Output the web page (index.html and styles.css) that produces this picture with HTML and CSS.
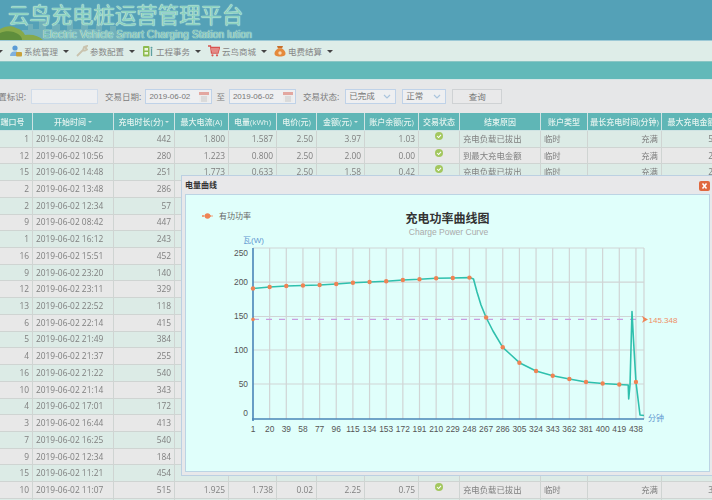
FILE: index.html
```html
<!DOCTYPE html>
<html lang="zh">
<head>
<meta charset="utf-8">
<title>云鸟充电桩运营管理平台</title>
<link rel="stylesheet" href="styles.css">
</head>
<body>
<div class="page">
  <header class="banner">
    <svg class="scene" viewBox="0 0 150 22" width="150" height="22">
      <path d="M22 22V12h6V6h5v5h6V3h7v8h6V6h8v6h7V2h6v9h8V4h7v7h8V6h6v7h8V8h6v7h8v7z" fill="#7fb9bc" opacity=".65"/>
      <path d="M0 11c5-3 12-4 16-1 4 1 8 4 9 7 8-1 14 1 18 5H0z" fill="#86a94a"/>
      <path d="M0 15c6-3 14-2 18 1 3 2 4 4 4 6H0z" fill="#5f8e3c"/>
    </svg>
    <h1 class="brand">云鸟充电桩运营管理平台</h1>
    <p class="slogan">Electric Vehicle Smart Charging Station lution</p>
  </header>

  <nav class="menu">
    <i class="caret"></i>
    <a class="menu-item"><svg class="ico" viewBox="0 0 12 12"><circle cx="5" cy="3" r="2.6" fill="#5b9bd5"/><path d="M0 11c0-3 2-4.5 4-4.5h3V11z" fill="#7fb0de"/><rect x="6" y="7" width="6" height="4.5" rx="1" fill="#c9a13a"/></svg>系统管理<i class="caret"></i></a>
    <a class="menu-item"><svg class="ico" viewBox="0 0 12 12"><path d="M1 11l6-6M7 5l1-3 3-1-1.5 2L11 4.500 9 5.500z" fill="none" stroke="#c9c3ae" stroke-width="1.800"/></svg>参数配置<i class="caret"></i></a>
    <a class="menu-item"><svg class="ico" viewBox="0 0 12 12"><rect x="1" y="1" width="6.500" height="10.500" rx="1" fill="#8dbb4e"/><rect x="2.500" y="3" width="3.500" height="2.500" fill="#eef5dd"/><rect x="2.500" y="7" width="3.500" height="2.500" fill="#eef5dd"/><path d="M9.500 4v7" stroke="#5ea0a0" stroke-width="1.300"/><circle cx="9.500" cy="2.800" r="1" fill="#5ea0a0"/></svg>工程事务<i class="caret"></i></a>
    <a class="menu-item"><svg class="ico" viewBox="0 0 12 12"><path d="M0 1h2.500l1 7h6.500l1.500-5.500H3" fill="none" stroke="#d9534f" stroke-width="1.300"/><path d="M3.500 3h7.500l-1 4.500H4.200z" fill="#e58a86"/><circle cx="4.500" cy="10.300" r="1.100" fill="#d9534f"/><circle cx="9" cy="10.300" r="1.100" fill="#d9534f"/></svg>云鸟商城<i class="caret"></i></a>
    <a class="menu-item"><svg class="ico" viewBox="0 0 12 12"><path d="M4 3.500L3 1h6L8 3.500z" fill="#c96f2a"/><path d="M4 3.500h4c2.500 1.500 3.500 3.500 3.500 5 0 2-1.500 3-5.500 3S.5 10.500.5 8.500c0-1.500 1-3.500 3.500-5z" fill="#e58a3c"/><circle cx="6" cy="8" r="1.700" fill="#f7d9b4"/></svg>电费结算<i class="caret"></i></a>
  </nav>

  <div class="strip"></div>

  <form class="filters">
    <label class="clip-label"><span>置标识:</span></label>
    <span class="field field-id"></span>
    <label class="lab lab-date">交易日期:</label>
    <span class="field field-date">2019-06-02<svg class="cal" viewBox="0 0 10 10"><rect width="10" height="10" fill="#ececec"/><rect width="10" height="3" fill="#e3a7a0"/><path d="M2 5h6M2 7h6M2 9h6" stroke="#c9c9c9"/></svg></span>
    <label class="lab">至</label>
    <span class="field field-date">2019-06-02<svg class="cal" viewBox="0 0 10 10"><rect width="10" height="10" fill="#ececec"/><rect width="10" height="3" fill="#e3a7a0"/><path d="M2 5h6M2 7h6M2 9h6" stroke="#c9c9c9"/></svg></span>
    <label class="lab lab-state">交易状态:</label>
    <span class="field field-select sel-a">已完成<svg class="chev" viewBox="0 0 8 5"><path d="M1 1l3 3 3-3" fill="none" stroke="#a9c4dd" stroke-width="1.200"/></svg></span>
    <span class="field field-select sel-b">正常<svg class="chev" viewBox="0 0 8 5"><path d="M1 1l3 3 3-3" fill="none" stroke="#a9c4dd" stroke-width="1.200"/></svg></span>
    <button class="query" type="button">查询</button>
  </form>

  <table class="grid">
    <colgroup>
      <col class="c1"><col class="c2"><col class="c3"><col class="c4"><col class="c5"><col class="c6"><col class="c7"><col class="c8"><col class="c9"><col class="c10"><col class="c11"><col class="c12"><col class="c13">
    </colgroup>
    <thead>
      <tr><th>端口号</th><th>开始时间 <i class="sort"></i></th><th>充电时长(分) <i class="sort"></i></th><th>最大电流(A)</th><th>电量(kWh)</th><th>电价(元)</th><th>金额(元) <i class="sort"></i></th><th>账户余额(元)</th><th>交易状态</th><th>结束原因</th><th>账户类型</th><th>最长充电时间(分钟)</th><th class="lastcol">最大充电金额</th></tr>
    </thead>
    <tbody>
      <tr><td>1</td><td class="l">2019-06-02 08:42</td><td>442</td><td>1.800</td><td>1.587</td><td>2.50</td><td>3.97</td><td>1.03</td><td class="ok"><svg class="tick" viewBox="0 0 10 10"><circle cx="5" cy="5" r="5" fill="#a3c75f"/><path d="M2.500 5l2 2 3-3.500" fill="none" stroke="#fff" stroke-width="1.300"/></svg></td><td class="l">充电负载已拔出</td><td class="l">临时</td><td>充满</td><td class="lastv">5</td></tr>
      <tr><td>12</td><td class="l">2019-06-02 10:56</td><td>280</td><td>1.223</td><td>0.800</td><td>2.50</td><td>2.00</td><td>0.00</td><td class="ok"><svg class="tick" viewBox="0 0 10 10"><circle cx="5" cy="5" r="5" fill="#a3c75f"/><path d="M2.500 5l2 2 3-3.500" fill="none" stroke="#fff" stroke-width="1.300"/></svg></td><td class="l">到最大充电金额</td><td class="l">临时</td><td>充满</td><td class="lastv">2</td></tr>
      <tr><td>15</td><td class="l">2019-06-02 14:48</td><td>251</td><td>1.773</td><td>0.633</td><td>2.50</td><td>1.58</td><td>0.42</td><td class="ok"><svg class="tick" viewBox="0 0 10 10"><circle cx="5" cy="5" r="5" fill="#a3c75f"/><path d="M2.500 5l2 2 3-3.500" fill="none" stroke="#fff" stroke-width="1.300"/></svg></td><td class="l">充电负载已拔出</td><td class="l">临时</td><td>充满</td><td class="lastv">2</td></tr>
      <tr><td>2</td><td class="l">2019-06-02 13:48</td><td>286</td><td colspan="10"></td></tr>
      <tr><td>2</td><td class="l">2019-06-02 12:34</td><td>57</td><td colspan="10"></td></tr>
      <tr><td>9</td><td class="l">2019-06-02 08:42</td><td>447</td><td colspan="10"></td></tr>
      <tr><td>1</td><td class="l">2019-06-02 16:12</td><td>243</td><td colspan="10"></td></tr>
      <tr><td>16</td><td class="l">2019-06-02 15:51</td><td>452</td><td colspan="10"></td></tr>
      <tr><td>9</td><td class="l">2019-06-02 23:20</td><td>140</td><td colspan="10"></td></tr>
      <tr><td>12</td><td class="l">2019-06-02 23:11</td><td>329</td><td colspan="10"></td></tr>
      <tr><td>13</td><td class="l">2019-06-02 22:52</td><td>118</td><td colspan="10"></td></tr>
      <tr><td>6</td><td class="l">2019-06-02 22:14</td><td>415</td><td colspan="10"></td></tr>
      <tr><td>5</td><td class="l">2019-06-02 21:49</td><td>384</td><td colspan="10"></td></tr>
      <tr><td>4</td><td class="l">2019-06-02 21:37</td><td>255</td><td colspan="10"></td></tr>
      <tr><td>16</td><td class="l">2019-06-02 21:22</td><td>540</td><td colspan="10"></td></tr>
      <tr><td>10</td><td class="l">2019-06-02 21:14</td><td>343</td><td colspan="10"></td></tr>
      <tr><td>4</td><td class="l">2019-06-02 17:01</td><td>172</td><td colspan="10"></td></tr>
      <tr><td>3</td><td class="l">2019-06-02 16:44</td><td>413</td><td colspan="10"></td></tr>
      <tr><td>7</td><td class="l">2019-06-02 16:25</td><td>540</td><td colspan="10"></td></tr>
      <tr><td>9</td><td class="l">2019-06-02 12:34</td><td>184</td><td colspan="10"></td></tr>
      <tr><td>15</td><td class="l">2019-06-02 11:21</td><td>454</td><td></td><td></td><td></td><td></td><td></td><td></td><td></td><td></td><td></td><td></td></tr>
      <tr><td>10</td><td class="l">2019-06-02 11:07</td><td>515</td><td>1.925</td><td>1.738</td><td>0.02</td><td>2.25</td><td>0.75</td><td class="ok"><svg class="tick" viewBox="0 0 10 10"><circle cx="5" cy="5" r="5" fill="#a3c75f"/><path d="M2.500 5l2 2 3-3.500" fill="none" stroke="#fff" stroke-width="1.300"/></svg></td><td class="l">充电负载已拔出</td><td class="l">临时</td><td>充满</td><td class="lastv">3</td></tr>
      <tr><td></td><td></td><td></td><td></td><td></td><td></td><td></td><td></td><td></td><td></td><td></td><td></td><td></td></tr>
    </tbody>
  </table>

  <section class="dialog">
    <div class="dialog-head">
      <span class="dialog-title">电量曲线</span>
      <svg class="close" viewBox="0 0 11 10"><rect width="11" height="10" rx="2" fill="#e0683f"/><path d="M3.500 2.500l4 5M7.500 2.500l-4 5" stroke="#fff" stroke-width="1.500"/></svg>
    </div>
    <div class="dialog-body">
      <svg class="chart" viewBox="185 194 525 278" width="525" height="278">
        <path class="grid-line" d="M253 248H644M253 282.200H644M253 316.500H644M253 350H644M253 384H644M269.650 248V419M286.300 248V419M302.950 248V419M319.600 248V419M336.250 248V419M352.900 248V419M369.550 248V419M386.200 248V419M402.850 248V419M419.500 248V419M436.150 248V419M452.800 248V419M469.450 248V419M486.100 248V419M502.750 248V419M519.400 248V419M536.050 248V419M552.700 248V419M569.350 248V419M586 248V419M602.650 248V419M619.300 248V419M635.950 248V419M644 248V419"/>
        <path class="axis" d="M253 248V421M252 419H644"/>
        <path class="mark-line" d="M253 319.400H640"/>
        <path class="curve" d="M253 288.500L269.650 287L286.300 286L302.950 285.500L319.600 285L336.250 284L352.900 282.700L369.550 282L386.200 281.200L402.850 280L419.500 279.300L436.150 278.200L452.800 278L469.450 277.600L473.500 279L477 292L481 305L486.100 317.500L493 331L502.750 347.300L510 354L519.400 362.700L536.050 371L552.700 375.700L569.350 379L586 382L602.650 383.500L619.300 384.500L628.200 385L628.700 399L630 385L632 311.500L633.500 340L635.950 382L640 415L644 415.500"/>
        <g class="dots">
          <circle cx="253" cy="288.500" r="2.200"/><circle cx="269.650" cy="287" r="2.200"/><circle cx="286.300" cy="286" r="2.200"/><circle cx="302.950" cy="285.500" r="2.200"/><circle cx="319.600" cy="285" r="2.200"/><circle cx="336.250" cy="284" r="2.200"/><circle cx="352.900" cy="282.700" r="2.200"/><circle cx="369.550" cy="282" r="2.200"/><circle cx="386.200" cy="281.200" r="2.200"/><circle cx="402.850" cy="280" r="2.200"/><circle cx="419.500" cy="279.300" r="2.200"/><circle cx="436.150" cy="278.200" r="2.200"/><circle cx="452.800" cy="278" r="2.200"/><circle cx="469.450" cy="277.600" r="2.200"/><circle cx="486.100" cy="317.500" r="2.200"/><circle cx="502.750" cy="347.300" r="2.200"/><circle cx="519.400" cy="362.700" r="2.200"/><circle cx="536.050" cy="371" r="2.200"/><circle cx="552.700" cy="375.700" r="2.200"/><circle cx="569.350" cy="379" r="2.200"/><circle cx="586" cy="382" r="2.200"/><circle cx="602.650" cy="383.500" r="2.200"/><circle cx="619.300" cy="384.500" r="2.200"/><circle cx="635.950" cy="382" r="2.200"/>
          <circle cx="253" cy="319.400" r="1.800"/>
          <path d="M642 316l6 3.400-6 3.400 1.500-3.400z"/>
        </g>
        <text class="mark-label" x="648.500" y="322.500">145.348</text>
        <g class="legend">
          <path d="M202 216H213" stroke="#ef8354" stroke-width="1.500" stroke-dasharray="2.500 1"/>
          <circle cx="207.500" cy="216" r="2.800" fill="#ef8354"/>
          <text x="219" y="219">有功功率</text>
        </g>
        <text class="chart-title" x="447.500" y="223" text-anchor="middle">充电功率曲线图</text>
        <text class="chart-sub" x="448.500" y="235" text-anchor="middle">Charge Power Curve</text>
        <text class="unit" x="243" y="243">瓦(W)</text>
        <text class="unit" x="648" y="421">分钟</text>
        <g class="yl" text-anchor="end">
          <text x="248" y="256">250</text><text x="248" y="285">200</text><text x="248" y="319">150</text><text x="248" y="353">100</text><text x="248" y="387">50</text><text x="248" y="416">0</text>
        </g>
        <g class="xl" text-anchor="middle">
          <text x="253" y="432">1</text><text x="269.650" y="432">20</text><text x="286.300" y="432">39</text><text x="302.950" y="432">58</text><text x="319.600" y="432">77</text><text x="336.250" y="432">96</text><text x="352.900" y="432">115</text><text x="369.550" y="432">134</text><text x="386.200" y="432">153</text><text x="402.850" y="432">172</text><text x="419.500" y="432">191</text><text x="436.150" y="432">210</text><text x="452.800" y="432">229</text><text x="469.450" y="432">248</text><text x="486.100" y="432">267</text><text x="502.750" y="432">286</text><text x="519.400" y="432">305</text><text x="536.050" y="432">324</text><text x="552.700" y="432">343</text><text x="569.350" y="432">362</text><text x="586" y="432">381</text><text x="602.650" y="432">400</text><text x="619.300" y="432">419</text><text x="635.950" y="432">438</text>
        </g>
      </svg>
    </div>
  </section>
</div>
</body>
</html>
```
FILE: styles.css
```css
html, body { margin: 0; height: 100%; overflow: hidden; background: #e8e8e8; }
body { font-family: "Open Sans", "Noto Sans CJK SC", sans-serif; color: #808080; }
.page { position: relative; width: 712px; height: 500px; overflow: hidden; filter: blur(.5px); }

.banner { position: relative; height: 40px; background: #54a1b7; border-bottom: 1px solid #9cc9d6; overflow: hidden; }
.scene { position: absolute; left: 0; bottom: 0; }
.brand { position: relative; margin: 0; padding: 2px 0 0 8px; font: 400 21.4px/24px "Noto Sans CJK SC", sans-serif; color: #8dd3c0; text-shadow: 0 0 1px #d9f5ea, 0 0 1px #d9f5ea; white-space: nowrap; }
.slogan { position: relative; margin: 0; padding: 4px 0 0 43px; font: 400 10.400px/10px "Liberation Sans", sans-serif; color: #74c2b0; text-shadow: 0 0 1px #e4f7f0, 0 0 1px #e4f7f0; white-space: nowrap; }

.menu { display: flex; align-items: center; height: 20px; margin-left: -3px; background: #deede8; border-bottom: 1px solid #8ac6c4; font: 400 8.500px/20px "Noto Sans CJK SC", sans-serif; color: #858585; }
.menu-item { display: flex; align-items: center; margin-left: 7px; white-space: nowrap; }
.ico { width: 12px; height: 12px; margin-right: 2px; }
.caret { display: block; width: 0; height: 0; border: 3px solid transparent; border-top: 3.500px solid #444; border-bottom: 0; margin-left: 5px; }
.menu > .caret { margin-left: 0; }

.strip { height: 17px; background: #62b9b9; border-bottom: 1px solid #d5e6e6; }

.filters { display: flex; align-items: center; height: 33px; margin: 0; background: #e6e7e8; font: 400 8.500px/15px "Noto Sans CJK SC", sans-serif; color: #7d7d7d; white-space: nowrap; }
.clip-label { display: flex; justify-content: flex-end; width: 26px; margin-right: 5px; overflow: hidden; flex: none; }
.clip-label span { flex: none; }
.field { display: flex; align-items: center; box-sizing: border-box; height: 15px; flex: none; background: #eeeff1; border: 1px solid #bfd2e8; padding-left: 3px; font-family: "Liberation Sans", "Noto Sans CJK SC", sans-serif; font-size: 8px; color: #777; }
.field-id { width: 67px; border-color: #d0dcea; }
.lab { margin: 0 4px; flex: none; }
.lab-date { margin-left: 7px; }
.lab-state { margin-left: 7px; margin-right: 6px; }
.field-date { width: 67px; justify-content: space-between; padding-right: 2px; }
.cal { width: 10px; height: 10px; }
.field-select { justify-content: space-between; padding-right: 4px; font-size: 8.500px; }
.sel-a { width: 51px; }
.sel-b { width: 44px; margin-left: 6px; }
.chev { width: 8px; height: 5px; }
.query { box-sizing: border-box; width: 50px; height: 15px; margin-left: 6px; padding: 0; background: #e9e9ea; border: 1px solid #cfd2d4; font: 400 8.500px/13px "Noto Sans CJK SC", sans-serif; color: #777; flex: none; }

.grid { table-layout: fixed; border-collapse: collapse; width: 729px; margin-left: -8px; font: 400 8.400px/10px "Open Sans", "Noto Sans CJK SC", sans-serif; color: #7f7f7f; }
.c1 { width: 40px; } .c2 { width: 81px; } .c3 { width: 61px; } .c4 { width: 54px; } .c5 { width: 48px; } .c6 { width: 40px; } .c7 { width: 48px; } .c8 { width: 54px; } .c9 { width: 41px; } .c10 { width: 81px; } .c11 { width: 47px; } .c12 { width: 74px; } .c13 { width: 60px; }
.grid th { height: 17px; padding: 0; background: #5fb6b6; border: 1px solid #cfe3e3; border-top: 0; color: #e4f3ef; font-weight: 500; font-size: 8px; white-space: nowrap; overflow: hidden; }
.grid td { height: 16.720px; box-sizing: border-box; padding: 0 3px; text-align: right; border: 1px solid #cfd4d2; white-space: nowrap; overflow: hidden; }
.grid tbody tr:nth-child(odd) { background: #dcebe6; }
.grid tbody tr:nth-child(even) { background: #e8e8e8; }
.grid td.l { text-align: left; }
.grid td.ok { text-align: center; vertical-align: top; padding-top: 1px; }
.grid td.lastv { padding-right: 8px; }
.tick { display: block; width: 8px; height: 8px; margin: 0 auto; }
.sort { display: inline-block; width: 0; height: 0; border: 2px solid transparent; border-top: 2.500px solid #cfe6e4; border-bottom: 0; vertical-align: middle; }
.lastcol { text-align: center; }

.dialog { position: absolute; left: 181px; top: 175px; width: 531px; height: 301px; box-sizing: border-box; padding: 0 2px 3px 3px; background: #e8e8ea; border: 1px solid #bcd0e2; border-right: 0; display: flex; flex-direction: column; }
.dialog-head { display: flex; align-items: center; justify-content: space-between; flex: none; height: 18px; }
.dialog-title { font: 700 8px/18px "Noto Sans CJK SC", sans-serif; color: #333; }
.close { width: 11px; height: 10px; margin-top: 1px; }
.dialog-body { flex: 1; background: #e0fffb; border: 1px solid #bcd4e4; overflow: hidden; }
.chart { display: block; margin: -1px 0 0 -1px; font-family: "Liberation Sans", sans-serif; }
.grid-line { fill: none; stroke: #d0d5d5; stroke-width: 1.200; }
.axis { fill: none; stroke: #4a86b8; stroke-width: 1.600; }
.mark-line { fill: none; stroke: #c79ee0; stroke-width: 1.300; stroke-dasharray: 6 7; }
.curve { fill: none; stroke: #2fc0ad; stroke-width: 1.600; stroke-linejoin: round; }
.dots { fill: #ef8354; }
.mark-label { font-size: 8px; fill: #ef8f66; }
.legend text { font: 400 8px "Noto Sans CJK SC", sans-serif; fill: #666; }
.chart-title { font: 700 12px "Noto Sans CJK SC", sans-serif; fill: #333; }
.chart-sub { font-size: 8.500px; fill: #aaa; }
.unit { font: 400 8px "Liberation Sans", "Noto Sans CJK SC", sans-serif; fill: #5f97d0; }
.yl text, .xl text { font-size: 8.400px; fill: #555; }
```
